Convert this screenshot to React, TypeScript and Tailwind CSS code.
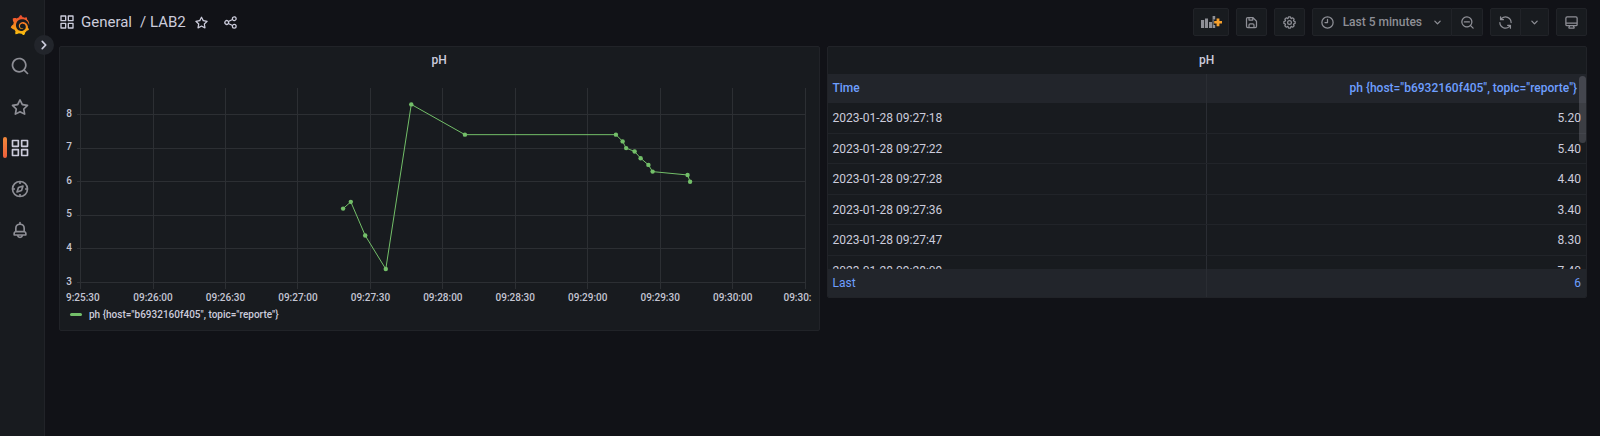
import type { ReactNode } from "react";
import { SiGrafana } from "react-icons/si";

const ICONS = {
  search:
    "M21.71,20.29,18,16.61A9,9,0,1,0,16.61,18l3.68,3.68a1,1,0,0,0,1.42,0A1,1,0,0,0,21.71,20.29ZM11,18a7,7,0,1,1,7-7A7,7,0,0,1,11,18Z",
  zoomOut:
    "M21.71,20.29,18,16.61A9,9,0,1,0,16.61,18l3.68,3.68a1,1,0,0,0,1.42,0A1,1,0,0,0,21.71,20.29ZM11,18a7,7,0,1,1,7-7A7,7,0,0,1,11,18ZM15,10H7a1,1,0,0,0,0,2h8a1,1,0,0,0,0-2Z",
  star: "M22,9.67A1,1,0,0,0,21.14,9l-5.69-.83L12.9,3a1,1,0,0,0-1.8,0L8.55,8.16,2.86,9a1,1,0,0,0-.81.68,1,1,0,0,0,.25,1l4.13,4-1,5.68A1,1,0,0,0,6.9,21.44L12,18.77l5.1,2.67a.93.93,0,0,0,.46.12,1,1,0,0,0,.59-.19,1,1,0,0,0,.4-1l-1-5.68,4.13-4A1,1,0,0,0,22,9.67Zm-6.15,4a1,1,0,0,0-.29.88l.72,4.2-3.76-2a1.06,1.06,0,0,0-.94,0l-3.76,2,.72-4.2a1,1,0,0,0-.29-.88l-3-3,4.21-.61a1,1,0,0,0,.76-.55L12,5.7l1.88,3.82a1,1,0,0,0,.76.55l4.21.61Z",
  apps: "M10,13H3a1,1,0,0,0-1,1v7a1,1,0,0,0,1,1h7a1,1,0,0,0,1-1V14A1,1,0,0,0,10,13ZM9,20H4V15H9ZM21,2H14a1,1,0,0,0-1,1v7a1,1,0,0,0,1,1h7a1,1,0,0,0,1-1V3A1,1,0,0,0,21,2ZM20,9H15V4h5Zm1,4H14a1,1,0,0,0-1,1v7a1,1,0,0,0,1,1h7a1,1,0,0,0,1-1V14A1,1,0,0,0,21,13Zm-1,7H15V15h5ZM10,2H3A1,1,0,0,0,2,3v7a1,1,0,0,0,1,1h7a1,1,0,0,0,1-1V3A1,1,0,0,0,10,2ZM9,9H4V4H9Z",
  bell: "M18,13.18V10a6,6,0,0,0-5-5.91V3a1,1,0,0,0-2,0V4.09A6,6,0,0,0,6,10v3.18A3,3,0,0,0,4,16v2a1,1,0,0,0,1,1H8.14a4,4,0,0,0,7.72,0H19a1,1,0,0,0,1-1V16A3,3,0,0,0,18,13.18ZM8,10a4,4,0,0,1,8,0v3H8Zm4,10a2,2,0,0,1-1.72-1h3.44A2,2,0,0,1,12,20Zm6-3H6V16a1,1,0,0,1,1-1H17a1,1,0,0,1,1,1Z",
  share:
    "M18,14a4,4,0,0,0-3.08,1.48l-5.1-2.35a3.64,3.64,0,0,0,0-2.26l5.1-2.35A4,4,0,1,0,14,6a4.17,4.17,0,0,0,.07.71L8.79,9.14a4,4,0,1,0,0,5.72l5.28,2.43A4.17,4.17,0,0,0,14,18a4,4,0,1,0,4-4ZM18,4a2,2,0,1,1-2,2A2,2,0,0,1,18,4ZM6,14a2,2,0,1,1,2-2A2,2,0,0,1,6,14Zm12,6a2,2,0,1,1,2-2A2,2,0,0,1,18,20Z",
  save: "m20.71 9.29-6-6a1 1 0 0 0-.32-.21A1.09 1.09 0 0 0 14 3H6a3 3 0 0 0-3 3v12a3 3 0 0 0 3 3h12a3 3 0 0 0 3-3v-8a1 1 0 0 0-.29-.71ZM9 5h4v2H9Zm6 14H9v-3a1 1 0 0 1 1-1h4a1 1 0 0 1 1 1Zm4-1a1 1 0 0 1-1 1h-1v-3a3 3 0 0 0-3-3h-4a3 3 0 0 0-3 3v3H6a1 1 0 0 1-1-1V6a1 1 0 0 1 1-1h1v3a1 1 0 0 0 1 1h6a1 1 0 0 0 1-1V6.41l4 4Z",
  cog: "M21.32,9.55l-1.89-.63.89-1.78A1,1,0,0,0,20.13,6L18,3.87a1,1,0,0,0-1.15-.19l-1.78.89-.63-1.89A1,1,0,0,0,13.5,2h-3a1,1,0,0,0-.95.68L8.92,4.57,7.14,3.68A1,1,0,0,0,6,3.87L3.87,6a1,1,0,0,0-.19,1.15l.89,1.78-1.89.63A1,1,0,0,0,2,10.5v3a1,1,0,0,0,.68.95l1.89.63-.89,1.78A1,1,0,0,0,3.87,18L6,20.13a1,1,0,0,0,1.15.19l1.78-.89.63,1.89a1,1,0,0,0,.95.68h3a1,1,0,0,0,.95-.68l.63-1.89,1.78.89A1,1,0,0,0,18,20.13L20.13,18a1,1,0,0,0,.19-1.15l-.89-1.78,1.89-.63A1,1,0,0,0,22,13.5v-3A1,1,0,0,0,21.32,9.55ZM20,12.78l-1.2.4A2,2,0,0,0,17.64,16l.57,1.14-1.1,1.1L16,17.64a2,2,0,0,0-2.79,1.16l-.4,1.2H11.22l-.4-1.2A2,2,0,0,0,8,17.64l-1.14.57-1.1-1.1L6.36,16A2,2,0,0,0,5.2,13.18L4,12.78V11.22l1.2-.4A2,2,0,0,0,6.36,8L5.79,6.89l1.1-1.1L8,6.36A2,2,0,0,0,10.82,5.2l.4-1.2h1.56l.4,1.2A2,2,0,0,0,16,6.36l1.14-.57,1.1,1.1L17.64,8a2,2,0,0,0,1.16,2.79l1.2.4ZM12,8a4,4,0,1,0,4,4A4,4,0,0,0,12,8Zm0,6a2,2,0,1,1,2-2A2,2,0,0,1,12,14Z",
  clock:
    "M12,2A10,10,0,1,0,22,12,10,10,0,0,0,12,2Zm0,18a8,8,0,1,1,8-8A8,8,0,0,1,12,20ZM12,6a1,1,0,0,0-1,1v4H8a1,1,0,0,0,0,2h4a1,1,0,0,0,1-1V7A1,1,0,0,0,12,6Z",
  angleDown:
    "M17,9.17a1,1,0,0,0-1.41,0L12,12.71,8.46,9.17a1,1,0,0,0-1.41,0,1,1,0,0,0,0,1.42l4.24,4.24a1,1,0,0,0,1.42,0L17,10.59A1,1,0,0,0,17,9.17Z",
  sync: "M19.91,15.51H15.38a1,1,0,0,0,0,2h2.4A8,8,0,0,1,4,12a1,1,0,0,0-2,0,10,10,0,0,0,16.88,7.23V21a1,1,0,0,0,2,0V16.5A1,1,0,0,0,19.91,15.51ZM12,2A10,10,0,0,0,5.12,4.77V3a1,1,0,0,0-2,0V7.5a1,1,0,0,0,1,1h4.5a1,1,0,0,0,0-2H6.22A8,8,0,0,1,20,12a1,1,0,0,0,2,0A10,10,0,0,0,12,2Z",
  monitor:
    "M19,2H5A3,3,0,0,0,2,5V15a3,3,0,0,0,3,3H7.64l-.58,1a2,2,0,0,0,0,2,2,2,0,0,0,1.75,1h6.46A2,2,0,0,0,17,21a2,2,0,0,0,0-2l-.59-1H19a3,3,0,0,0,3-3V5A3,3,0,0,0,19,2ZM8.77,20,10,18H14l1.2,2ZM20,15a1,1,0,0,1-1,1H5a1,1,0,0,1-1-1V14H20Zm0-3H4V5A1,1,0,0,1,5,4H19a1,1,0,0,1,1,1Z",
};

function Icon({ name, className }: { name: keyof typeof ICONS; className: string }) {
  return (
    <svg viewBox="0 0 24 24" fill="currentColor" className={className} aria-hidden="true">
      <path d={ICONS[name]} />
    </svg>
  );
}

function CompassIcon() {
  return (
    <svg viewBox="0 0 24 24" fill="none" stroke="currentColor" strokeWidth="2" className="size-5" aria-hidden="true">
      <circle cx="12" cy="12" r="9" />
      <path d="M12 3v3M12 18v3M3 12h3M18 12h3" />
      <path d="M15.6 8.4l-1.8 5.4-5.4 1.8 1.8-5.4z" strokeLinejoin="round" />
    </svg>
  );
}

function AddPanelIcon() {
  return (
    <svg viewBox="0 0 22 14" className="h-3.5 w-[22px]" aria-hidden="true">
      <g fill="#8e8f96">
        <path d="M1 5h3.2V13H1zM5 3.5h3V13H5zM9 7h3V13H9zM12.6 1h2.6v3.6h-2.6zM12.6 10h2.6v3h-2.6z" />
        <path d="M12.6 4.6h1v5.4h-1z" />
      </g>
      <path d="M16.6 3.4h2.8v2.5H22v2.7h-2.6v2.6h-2.8V8.6h-2.4V5.9h2.4z" fill="#f5a02c" />
    </svg>
  );
}

function SideLink({ label, active, children }: { label: string; active?: boolean; children: ReactNode }) {
  return (
    <li className="relative">
      {active && (
        <span className="absolute top-2.5 left-[3px] h-[21px] w-1 rounded-xs bg-linear-to-b from-[#f0883a] to-[#ee5f3c]" />
      )}
      <a
        href="#"
        aria-label={label}
        className={`flex h-[41px] items-center pl-2.5 ${active ? "text-[#ccccdc]" : "text-[#8e8f96]"}`}
      >
        {children}
      </a>
    </li>
  );
}

function Sidebar() {
  return (
    <nav aria-label="Main" className="relative w-[45px] shrink-0 border-r border-[#212328] bg-[#181b1f]">
      <svg className="absolute size-0" aria-hidden="true">
        <linearGradient id="brand" x1="0" y1="0" x2="0" y2="1">
          <stop offset="0.1" stopColor="#ee5030" />
          <stop offset="1" stopColor="#fbc60c" />
        </linearGradient>
      </svg>
      <a href="#" aria-label="Home" className="flex h-[45px] items-center pt-[5px] pl-2.5">
        <SiGrafana className="size-5 fill-[url(#brand)]" fill="url(#brand)" />
      </a>
      <ul>
        <SideLink label="Search">
          <Icon name="search" className="size-5" />
        </SideLink>
        <SideLink label="Starred">
          <Icon name="star" className="size-5" />
        </SideLink>
        <SideLink label="Dashboards" active>
          <Icon name="apps" className="size-5" />
        </SideLink>
        <SideLink label="Explore">
          <CompassIcon />
        </SideLink>
        <SideLink label="Alerting">
          <Icon name="bell" className="size-5" />
        </SideLink>
      </ul>
      <button
        type="button"
        aria-label="Expand menu"
        className="absolute top-[35px] -right-2.5 flex size-5 items-center justify-center rounded-full bg-[#22252b] text-[#ccccdc]"
      >
        <Icon name="angleDown" className="size-5 -rotate-90" />
      </button>
    </nav>
  );
}

function ToolButton({ label, className, children }: { label: string; className: string; children: ReactNode }) {
  return (
    <button
      type="button"
      aria-label={label}
      className={`flex h-7 items-center justify-center border border-[#212328] bg-[#181b1f] text-[#8e8f96] ${className}`}
    >
      {children}
    </button>
  );
}

function Toolbar() {
  return (
    <header className="flex h-[46px] items-center justify-between pb-0.5">
      <div className="flex items-center text-[#ccccdc]">
        <Icon name="apps" className="size-4" />
        <h1 className="ml-1.5 flex gap-2 text-[15px] leading-5">
          <a href="#">General</a>
          <a href="#">/ LAB2</a>
        </h1>
        <button type="button" aria-label="Mark as favorite" className="ml-2">
          <Icon name="star" className="size-[15px]" />
        </button>
        <button type="button" aria-label="Share dashboard" className="ml-[14px]">
          <Icon name="share" className="size-[15px]" />
        </button>
      </div>
      <div className="flex gap-[7px]">
        <ToolButton label="Add panel" className="w-9 rounded-xs">
          <AddPanelIcon />
        </ToolButton>
        <ToolButton label="Save dashboard" className="w-[31px] rounded-xs">
          <Icon name="save" className="size-[15px]" />
        </ToolButton>
        <ToolButton label="Dashboard settings" className="w-[31px] rounded-xs">
          <Icon name="cog" className="size-[15px]" />
        </ToolButton>
        <div className="flex">
          <ToolButton label="Time range: Last 5 minutes" className="rounded-l-xs px-1.5">
            <Icon name="clock" className="ml-px size-[15px]" />
            <span className="mx-2 text-xs font-medium">Last 5 minutes</span>
            <Icon name="angleDown" className="size-[15px]" />
          </ToolButton>
          <ToolButton label="Zoom out" className="w-[31px] rounded-r-xs border-l-0">
            <Icon name="zoomOut" className="size-[15px]" />
          </ToolButton>
        </div>
        <div className="flex">
          <ToolButton label="Refresh dashboard" className="w-[31px] rounded-l-xs">
            <Icon name="sync" className="size-[15px]" />
          </ToolButton>
          <ToolButton label="Auto refresh interval" className="w-7 rounded-r-xs border-l-0">
            <Icon name="angleDown" className="size-[15px]" />
          </ToolButton>
        </div>
        <ToolButton label="Cycle view mode" className="w-[31px] rounded-xs">
          <Icon name="monitor" className="size-[15px]" />
        </ToolButton>
      </div>
    </header>
  );
}

function Panel({ title, children }: { title: string; children: ReactNode }) {
  return (
    <section className="min-w-0 flex-1 overflow-hidden rounded-xs border border-[#212328] bg-[#181b1f]">
      <h2 className="flex h-[27px] items-center justify-center pb-0.5 text-xs font-medium text-[#ccccdc]">{title}</h2>
      {children}
    </section>
  );
}

// Horizontal positions are shares of the drawing's width, so the chart stretches with its panel.
const VIEW = 746;
const AXIS = 14.6;
const STEP = 72.5;
const share = (x: number) => `${(x / VIEW) * 100}%`;
const yOf = (v: number) => 208.5 - (v - 3) * 33.6;

const TICKS = [
  "09:26:00",
  "09:26:30",
  "09:27:00",
  "09:27:30",
  "09:28:00",
  "09:28:30",
  "09:29:00",
  "09:29:30",
  "09:30:00",
];

const POINTS: [number, number][] = [
  [277.3, 5.2],
  [285, 5.4],
  [299.4, 4.4],
  [320, 3.4],
  [345.5, 8.3],
  [399.2, 7.4],
  [550.3, 7.4],
  [557, 7.2],
  [560.5, 7.0],
  [569, 6.9],
  [575, 6.7],
  [582.8, 6.5],
  [587, 6.3],
  [622, 6.2],
  [624.5, 6.0],
];

function TimeSeries() {
  return (
    <div className="pr-[7px] pl-1.5">
      <svg className="block h-[232px] w-full text-[10px] font-medium" role="img" aria-label="pH over time">
        <g stroke="#2c2f33" shapeRendering="crispEdges">
          {Array.from({ length: 11 }, (_, i) => (
            <line key={i} x1={share(AXIS + i * STEP)} x2={share(AXIS + i * STEP)} y1="14" y2="215" />
          ))}
          {[3, 4, 5, 6, 7, 8].map((v) => (
            <line key={v} x1={share(11)} x2={share(AXIS + 10 * STEP)} y1={yOf(v)} y2={yOf(v)} />
          ))}
        </g>
        <g fill="#c4c5d3">
          {[3, 4, 5, 6, 7, 8].map((v) => (
            <text key={v} x="6" y={yOf(v) + 2} textAnchor="end">
              {v}
            </text>
          ))}
          <text x="0" y="227">
            9:25:30
          </text>
          {TICKS.map((t, i) => (
            <text key={t} x={share(AXIS + (i + 1) * STEP)} y="227" textAnchor="middle">
              {t}
            </text>
          ))}
          <text x="100%" y="227" textAnchor="end">
            09:30:
          </text>
        </g>
        <g stroke="#73bf69">
          {POINTS.slice(1).map(([x, v], i) => (
            <line key={x} x1={share(POINTS[i][0])} y1={yOf(POINTS[i][1])} x2={share(x)} y2={yOf(v)} />
          ))}
        </g>
        <g fill="#73bf69">
          {POINTS.map(([x, v]) => (
            <circle key={x} cx={share(x)} cy={yOf(v)} r="2.2" />
          ))}
        </g>
      </svg>
      <button
        type="button"
        className="mb-2 ml-1 flex h-4 items-center gap-[7px] text-[10px] font-medium text-[#ccccdc]"
      >
        <span className="h-[3px] w-3 rounded-xs bg-[#73bf69]" />
        ph {'{host="b6932160f405", topic="reporte"}'}
      </button>
    </div>
  );
}

const ROWS = [
  ["2023-01-28 09:27:18", "5.20"],
  ["2023-01-28 09:27:22", "5.40"],
  ["2023-01-28 09:27:28", "4.40"],
  ["2023-01-28 09:27:36", "3.40"],
  ["2023-01-28 09:27:47", "8.30"],
  ["2023-01-28 09:28:09", "7.40"],
];

function DataTable() {
  return (
    <div className="relative">
      <table className="flex flex-col text-xs text-[#ccccdc]">
        <thead className="block bg-[#22252b] text-[#6e9fff]">
          <tr className="grid h-[29px] grid-cols-2">
            <th scope="col" className="flex items-center border-r border-[#2a2d33] px-[5px] pb-0.5 font-medium">
              Time
            </th>
            <th scope="col" className="flex items-center justify-end pr-[9px] pb-0.5 font-medium">
              ph {'{host="b6932160f405", topic="reporte"}'}
            </th>
          </tr>
        </thead>
        <tbody className="block h-[166px] overflow-hidden">
          {ROWS.map(([time, value]) => (
            <tr key={time} className="grid grid-cols-2 border-b border-[#212429] odd:h-[31px] even:h-[30px]">
              <td className="flex items-center border-r border-[#2a2d33] px-[5px]">{time}</td>
              <td className="flex items-center justify-end pr-[5px]">{value}</td>
            </tr>
          ))}
        </tbody>
        <tfoot className="block bg-[#22252b] text-[#6e9fff]">
          <tr className="grid h-7 grid-cols-2">
            <td className="flex items-center border-r border-[#2a2d33] px-[5px]">Last</td>
            <td className="flex items-center justify-end pr-[5px]">6</td>
          </tr>
        </tfoot>
      </table>
      <div className="absolute top-0.5 right-0 h-[67px] w-[7px] rounded-full bg-[#ccccdc]/20" />
    </div>
  );
}

export default function App() {
  return (
    <div className="flex min-h-screen bg-[#111217] font-['Roboto',sans-serif]">
      <Sidebar />
      <main className="min-w-0 flex-1 pr-[13px] pl-[14px]">
        <Toolbar />
        <div className="flex items-start gap-[7px]">
          <Panel title="pH">
            <TimeSeries />
          </Panel>
          <Panel title="pH">
            <DataTable />
          </Panel>
        </div>
      </main>
    </div>
  );
}
